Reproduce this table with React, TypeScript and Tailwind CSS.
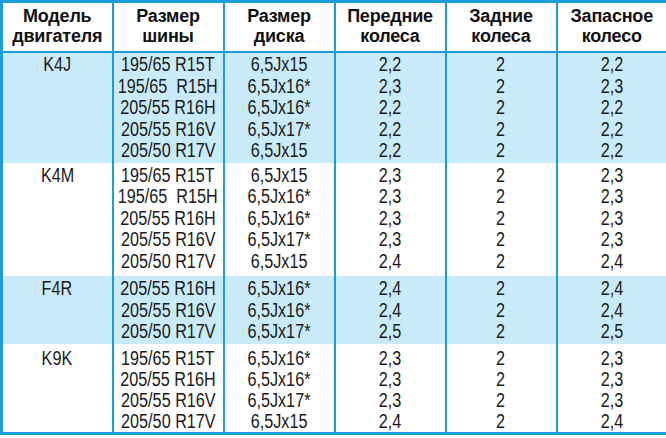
import React from "react";

type Group = {
  engine: string;
  shaded: boolean;
  pad: string;
  rows: [string, string, string, string, string][];
};

const GROUPS: Group[] = [
  {
    engine: "K4J",
    shaded: true,
    pad: "pt-[1.5px] pb-[1px] leading-[21.5px]",
    rows: [
      ["195/65 R15T", "6,5Jx15", "2,2", "2", "2,2"],
      ["195/65  R15H", "6,5Jx16*", "2,3", "2", "2,3"],
      ["205/55 R16H", "6,5Jx16*", "2,2", "2", "2,2"],
      ["205/55 R16V", "6,5Jx17*", "2,2", "2", "2,2"],
      ["205/50 R17V", "6,5Jx15", "2,2", "2", "2,2"],
    ],
  },
  {
    engine: "K4M",
    shaded: false,
    pad: "pt-[2px] pb-[3.5px] leading-[21.5px]",
    rows: [
      ["195/65 R15T", "6,5Jx15", "2,3", "2", "2,3"],
      ["195/65  R15H", "6,5Jx16*", "2,3", "2", "2,3"],
      ["205/55 R16H", "6,5Jx16*", "2,3", "2", "2,3"],
      ["205/55 R16V", "6,5Jx17*", "2,3", "2", "2,3"],
      ["205/50 R17V", "6,5Jx15", "2,4", "2", "2,4"],
    ],
  },
  {
    engine: "F4R",
    shaded: true,
    pad: "pt-[2.5px] pb-[1px] leading-[21.5px]",
    rows: [
      ["205/55 R16H", "6,5Jx16*", "2,4", "2", "2,4"],
      ["205/55 R16V", "6,5Jx16*", "2,4", "2", "2,4"],
      ["205/50 R17V", "6,5Jx17*", "2,5", "2", "2,5"],
    ],
  },
  {
    engine: "K9K",
    shaded: false,
    pad: "pt-[4px] pb-0 leading-[21px]",
    rows: [
      ["195/65 R15T", "6,5Jx16*", "2,3", "2", "2,3"],
      ["205/55 R16H", "6,5Jx16*", "2,3", "2", "2,3"],
      ["205/55 R16V", "6,5Jx17*", "2,3", "2", "2,3"],
      ["205/50 R17V", "6,5Jx15", "2,4", "2", "2,4"],
    ],
  },
];

const HEADERS = [
  ["Модель", "двигателя"],
  ["Размер", "шины"],
  ["Размер", "диска"],
  ["Передние", "колеса"],
  ["Задние", "колеса"],
  ["Запасное", "колесо"],
];

// condensed look: Arial-metric face squeezed horizontally
function Narrow({ text }: { text: string }) {
  return (
    <div className="flex justify-center">
      <span className="inline-block whitespace-pre scale-x-[0.81] origin-center">
        {text}
      </span>
    </div>
  );
}

export default function App() {
  return (
    <div className="w-[666px] h-[438px] bg-white">
      <table className="w-[666px] table-fixed border-collapse border-[3px] border-[#1b9ddb] text-[#1a1a1a] font-['Liberation_Sans',Arial,sans-serif]">
        <thead>
          <tr>
            {HEADERS.map((h, i) => (
              <th
                key={i}
                className="w-[111px] h-[50px] p-0 border-2 border-[#1b9ddb] text-center align-middle text-[18px] leading-[19.5px] font-bold tracking-[-0.2px] text-[#111]"
              >
                {h[0]}
                <br />
                {h[1]}
              </th>
            ))}
          </tr>
        </thead>
        <tbody>
          {GROUPS.map((g) => {
            const bg = g.shaded ? "bg-[#c9eaf9]" : "bg-white";
            const cell = `border-x-2 border-[#1b9ddb] ${bg} ${g.pad} text-center align-top px-0 text-[20px]`;
            return (
              <tr key={g.engine}>
                <td className={cell}>
                  <Narrow text={g.engine} />
                </td>
                {[0, 1, 2, 3, 4].map((c) => (
                  <td key={c} className={cell}>
                    {g.rows.map((r, i) => (
                      <Narrow key={i} text={r[c]} />
                    ))}
                  </td>
                ))}
              </tr>
            );
          })}
        </tbody>
      </table>
    </div>
  );
}
